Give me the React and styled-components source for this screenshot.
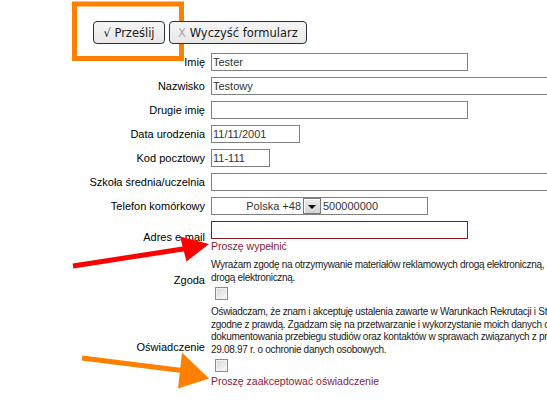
import styled, { createGlobalStyle } from 'styled-components';

const GlobalStyle = createGlobalStyle`
  html, body {
    margin: 0;
    padding: 0;
    background: #fff;
  }
  body {
    font-family: "Liberation Sans", Arial, sans-serif;
  }
`;

const zgodaLines = [
  'Wyrażam zgodę na otrzymywanie materiałów reklamowych drogą elektroniczną, zgodnie z ustawą z dnia 18 lipca 2002 r. o świadczeniu usług',
  'drogą elektroniczną.',
];

const oswLines = [
  'Oświadczam, że znam i akceptuję ustalenia zawarte w Warunkach Rekrutacji i Studiów oraz że dane zawarte w formularzu są',
  'zgodne z prawdą. Zgadzam się na przetwarzanie i wykorzystanie moich danych osobowych w celach rekrutacji,',
  'dokumentowania przebiegu studiów oraz kontaktów w sprawach związanych z procesem rekrutacji zgodnie z ustawą z dnia',
  '29.08.97 r. o ochronie danych osobowych.',
];

const textRows = [
  { label: 'Imię', value: 'Tester', w: 257 },
  { label: 'Nazwisko', value: 'Testowy', w: 400 },
  { label: 'Drugie imię', value: '', w: 257 },
  { label: 'Data urodzenia', value: '11/11/2001', w: 89 },
  { label: 'Kod pocztowy', value: '11-111', w: 59 },
  { label: 'Szkoła średnia/uczelnia', value: '', w: 400 },
];

const App = () => {
  return (
    <>
      <GlobalStyle />
      <Page>
        {/* orange frame sits under the buttons */}
        <Overlay width="547" height="414" viewBox="0 0 547 414" $z={0}>
          <rect x="74.5" y="4" width="107" height="54.5" fill="none" stroke="#ff7f00" strokeWidth="5" />
        </Overlay>

        <ButtonBar>
          <Button type="button" $w={72}>√ Prześlij</Button>
          <Button type="button" $w={138}>
            <span className="mark">X</span> Wyczyść formularz
          </Button>
        </ButtonBar>

        <Form>
          {textRows.map((r) => (
            <Row key={r.label}>
              <Label>{r.label}</Label>
              <Field>
                <TextInput $w={r.w} defaultValue={r.value} readOnly />
              </Field>
            </Row>
          ))}

          <Row>
            <Label>Telefon komórkowy</Label>
            <Field>
              <PhoneBox>
                <Country>Polska +48</Country>
                <DropButton>
                  <Caret />
                </DropButton>
                <PhoneNumber>500000000</PhoneNumber>
              </PhoneBox>
            </Field>
          </Row>

          <Row>
            <Label>Adres e-mail</Label>
            <Field>
              <TextInput $w={257} $invalid defaultValue="" readOnly />
              <ErrorText $mt={1}>Proszę wypełnić</ErrorText>
            </Field>
          </Row>

          <Row>
            <Label>Zgoda</Label>
            <Field>
              <Note>
                {zgodaLines.map((l) => (
                  <div key={l}>{l}</div>
                ))}
              </Note>
              <Check />
            </Field>
          </Row>

          <Row>
            <Label>Oświadczenie</Label>
            <Field>
              <Note>
                {oswLines.map((l) => (
                  <div key={l}>{l}</div>
                ))}
              </Note>
              <Check />
              <ErrorText $mt={3}>Proszę zaakceptować oświadczenie</ErrorText>
            </Field>
          </Row>
        </Form>

        {/* arrows drawn over the form */}
        <Overlay width="547" height="414" viewBox="0 0 547 414" $z={3}>
          <line x1="73" y1="266" x2="186" y2="248.5" stroke="#ff0000" strokeWidth="5" />
          <polygon points="180,236.5 209,244 186.5,261.5" fill="#ff0000" />
          <line x1="82" y1="358" x2="182" y2="370.5" stroke="#ff7f00" strokeWidth="5" />
          <polygon points="182,352.5 209,378.5 178,388.5" fill="#ff7f00" />
        </Overlay>
      </Page>
    </>
  );
};

export default App;


const Page = styled.div`
  position: relative;
  width: 547px;
  height: 414px;
  overflow: hidden;
  background: #fff;
`;

const ButtonBar = styled.div`
  position: relative;
  z-index: 1;
  display: flex;
  gap: 4px;
  padding: 21px 0 0 93px;
`;

const Button = styled.button`
  box-sizing: border-box;
  width: ${({ $w }) => $w}px;
  height: 23px;
  margin: 0;
  padding: 0;
  border: 1px solid #27323e;
  border-radius: 4px;
  background: linear-gradient(#f5f5f5, #e8e8e8);
  font: 11.5px "DejaVu Sans", Verdana, sans-serif;
  color: #1a1a1a;
  white-space: nowrap;

  .mark {
    color: #a9a9a9;
  }
`;

const Form = styled.div`
  display: grid;
  grid-template-columns: 205px 1fr;
  column-gap: 6px;
  row-gap: 6px;
  margin-top: 9px;
`;

const Row = styled.div`
  display: contents;
`;

const Label = styled.div`
  align-self: center;
  text-align: right;
  font-size: 11px;
  color: #000;
  white-space: nowrap;
`;

const Field = styled.div`
  display: flex;
  flex-direction: column;
  align-items: flex-start;
  min-width: 0;
`;

const TextInput = styled.input`
  box-sizing: border-box;
  display: block;
  width: ${({ $w }) => $w}px;
  height: 18px;
  margin: 0;
  padding: 0 1px;
  border: 1px solid ${({ $invalid }) => ($invalid ? '#861c22' : '#808080')};
  border-radius: 0;
  background: #fff;
  font: 11px "Liberation Sans", Arial, sans-serif;
  color: #333;
  outline: none;
`;

const PhoneBox = styled.div`
  box-sizing: border-box;
  display: flex;
  align-items: center;
  width: 217px;
  height: 18px;
  border: 1px solid #808080;
  background: #fff;
  font-size: 11px;
  color: #333;
`;

const Country = styled.span`
  width: 89px;
  text-align: right;
  white-space: nowrap;
`;

const DropButton = styled.span`
  box-sizing: border-box;
  display: flex;
  align-items: center;
  justify-content: center;
  width: 18px;
  height: 16px;
  margin-left: 2px;
  border: 1px solid #7a7a7a;
  background: linear-gradient(#ececec, #d4d4d4);
  box-shadow: inset 1px 1px 0 #fff;
`;

const Caret = styled.span`
  width: 0;
  height: 0;
  border-left: 4px solid transparent;
  border-right: 4px solid transparent;
  border-top: 4px solid #000;
  margin-top: 1px;
`;

const PhoneNumber = styled.span`
  margin-left: 2px;
  white-space: nowrap;
`;

const ErrorText = styled.div`
  margin-top: ${({ $mt }) => $mt}px;
  font-size: 10.5px;
  line-height: 13px;
  color: #861b3c;
  white-space: nowrap;
`;

const Note = styled.div`
  font-size: 10px;
  line-height: 12.5px;
  letter-spacing: -0.3px;
  color: #1a1a1a;
  white-space: nowrap;
`;

const Check = styled.span`
  box-sizing: border-box;
  display: block;
  width: 13px;
  height: 13px;
  margin: 3px 0 0 4px;
  border: 1px solid #8c8c8c;
  background: linear-gradient(135deg, #d6d6d6, #fbfbfb);
  box-shadow: inset 0 0 0 1px #f3f3f3;
`;

const Overlay = styled.svg`
  position: absolute;
  left: 0;
  top: 0;
  z-index: ${({ $z }) => $z};
  pointer-events: none;
`;
